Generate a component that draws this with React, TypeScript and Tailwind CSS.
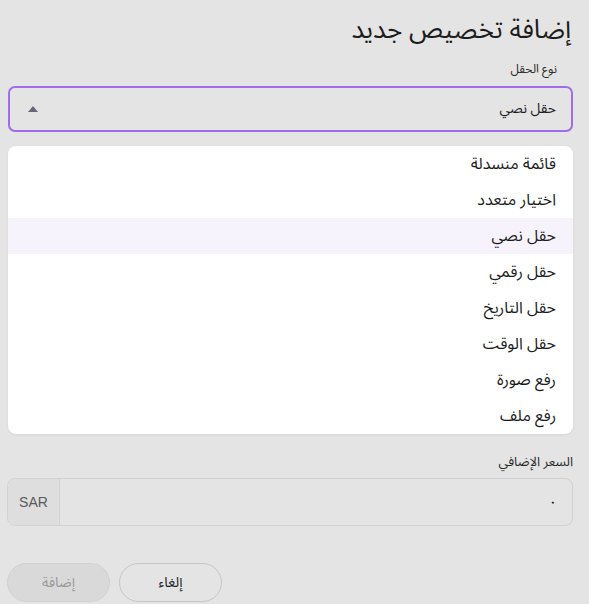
import React from "react";

const OPTIONS = [
  "قائمة منسدلة",
  "اختيار متعدد",
  "حقل نصي",
  "حقل رقمي",
  "حقل التاريخ",
  "حقل الوقت",
  "رفع صورة",
  "رفع ملف",
];

const SELECTED = "حقل نصي";

export default function App() {
  return (
    <div
      dir="rtl"
      className="w-[589px] h-[604px] overflow-hidden bg-[#e4e4e4] text-[#1c1c1c]"
      style={{ fontFamily: '"Noto Sans Arabic", "Noto Sans", "DejaVu Sans", sans-serif' }}
    >
      {/* Title */}
      <div className="pr-[18px] pt-[12px]">
        <h2 className="text-[26px] leading-[36px] font-normal">إضافة تخصيص جديد</h2>
      </div>

      <div className="pr-[16px] pl-[8px]">
        {/* Field type */}
        <label className="block pr-[16px] pt-[13px] text-[12px] leading-[18px] text-[#2a2a2a]">
          نوع الحقل
        </label>
        <div className="mt-[7px] h-[46px] rounded-[7px] border-2 border-[#9f6cea] flex items-center justify-between pr-[15px] pl-[18px]">
          <span className="text-[14px] leading-[20px]">{SELECTED}</span>
          <svg width="10" height="6" viewBox="0 0 10 6" aria-hidden="true">
            <path d="M0 6 L5 0 L10 6 Z" fill="#6e6477" />
          </svg>
        </div>

        {/* Options list */}
        <ul className="mt-[14px] bg-white rounded-[8px] overflow-hidden shadow-[0_1px_3px_rgba(0,0,0,0.06)]">
          {OPTIONS.map((opt) => (
            <li
              key={opt}
              className={
                "h-[36px] flex items-center pr-[17px] text-[16px] leading-[22px] " +
                (opt === SELECTED ? "bg-[#f7f3fd]" : "")
              }
            >
              {opt}
            </li>
          ))}
        </ul>
      </div>

      {/* Extra price */}
      <div className="pr-[16px] pl-[7px] pt-[19px]">
        <label className="block text-[13px] leading-[18px] text-[#2a2a2a]">
          السعر الإضافي
        </label>
        <div className="mt-[7px] h-[48px] rounded-[8px] border border-[#d2d2d2] flex overflow-hidden">
          <div className="flex-1 flex items-center pr-[15px] text-[15px]">٠</div>
          <div
            className="w-[52px] flex items-center justify-center border-r border-[#d2d2d2] bg-[#dedede] text-[14px] text-[#5a5a5a]"
            style={{ fontFamily: '"Liberation Sans", Arial, sans-serif' }}
          >
            SAR
          </div>
        </div>
      </div>

      {/* Actions */}
      <div className="px-[7px] pt-[37px] flex justify-end gap-[9px]">
        <button className="w-[103px] h-[39px] rounded-full border border-[#c6c6c6] text-[14px] text-[#1c1c1c] bg-transparent">
          إلغاء
        </button>
        <button
          disabled
          className="w-[103px] h-[39px] rounded-full bg-[#d9d9d9] border border-[#d2d2d2] text-[14px] text-[#9a9a9a]"
        >
          إضافة
        </button>
      </div>
    </div>
  );
}
